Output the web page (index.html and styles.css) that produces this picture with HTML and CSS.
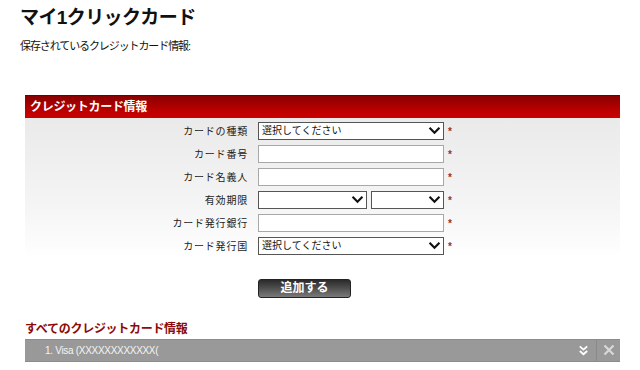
FILE: index.html
```html
<!DOCTYPE html>
<html lang="ja">
  <head>
    <meta charset="utf-8" />
    <title>マイ1クリックカード</title>
    <link rel="stylesheet" href="styles.css">
  </head>
  <body>
    <div class="page">
      <h1>マイ1クリックカード</h1>
      <p class="intro">保存されているクレジットカード情報:</p>

      <div class="panel">
        <div class="panel-head">クレジットカード情報</div>
        <form class="panel-body">
          <div class="form-row">
            <label for="cardType">カードの種類</label>
            <div class="field">
              <span class="select-wrap wide">
                <select id="cardType"><option>選択してください</option></select>
                <svg class="chev" viewBox="0 0 14 10"><path d="M1.5 2 L7 7.5 L12.5 2" fill="none" stroke="#111" stroke-width="2.4"/></svg>
              </span>
              <span class="req">*</span>
            </div>
          </div>
          <div class="form-row">
            <label for="cardNo">カード番号</label>
            <div class="field">
              <input id="cardNo" type="text" class="wide" />
              <span class="req">*</span>
            </div>
          </div>
          <div class="form-row">
            <label for="holder">カード名義人</label>
            <div class="field">
              <input id="holder" type="text" class="wide" />
              <span class="req">*</span>
            </div>
          </div>
          <div class="form-row">
            <label for="expMonth">有効期限</label>
            <div class="field">
              <span class="select-wrap month">
                <select id="expMonth"><option></option></select>
                <svg class="chev" viewBox="0 0 14 10"><path d="M1.5 2 L7 7.5 L12.5 2" fill="none" stroke="#111" stroke-width="2.4"/></svg>
              </span>
              <span class="select-wrap year">
                <select id="expYear"><option></option></select>
                <svg class="chev" viewBox="0 0 14 10"><path d="M1.5 2 L7 7.5 L12.5 2" fill="none" stroke="#111" stroke-width="2.4"/></svg>
              </span>
              <span class="req">*</span>
            </div>
          </div>
          <div class="form-row">
            <label for="bank">カード発行銀行</label>
            <div class="field">
              <input id="bank" type="text" class="wide" />
              <span class="req">*</span>
            </div>
          </div>
          <div class="form-row">
            <label for="country">カード発行国</label>
            <div class="field">
              <span class="select-wrap wide">
                <select id="country"><option>選択してください</option></select>
                <svg class="chev" viewBox="0 0 14 10"><path d="M1.5 2 L7 7.5 L12.5 2" fill="none" stroke="#111" stroke-width="2.4"/></svg>
              </span>
              <span class="req">*</span>
            </div>
          </div>
          <div class="button-row">
            <button type="button" class="add-btn">追加する</button>
          </div>
        </form>
      </div>

      <h2 class="list-title">すべてのクレジットカード情報</h2>
      <div class="card-item">
        <span class="card-name">1. Visa (XXXXXXXXXXXX(</span>
        <span class="card-actions">
          <svg class="icon-more" viewBox="0 0 12 12"><path d="M2 1.5 L6 5 L10 1.5 M2 6.5 L6 10 L10 6.5" fill="none" stroke="#fff" stroke-width="2"/></svg>
          <span class="sep"></span>
          <svg class="icon-close" viewBox="0 0 12 12"><path d="M1.5 1.5 L10.5 10.5 M10.5 1.5 L1.5 10.5" fill="none" stroke="#d8d8d8" stroke-width="2.2"/></svg>
        </span>
      </div>
    </div>
  </body>
</html>
```

FILE: styles.css
```css
:root {
  --text-color: #111111;
  --head-red: #c00000;
  --head-dark: #8e0000;
  --title-red: #8b0a0a;
  --bar-gray: #999999;
}

* {
  box-sizing: border-box;
}

body {
  margin: 0;
  background: #ffffff;
  color: var(--text-color);
  font-family: "Liberation Sans", "Noto Sans CJK JP", sans-serif;
}

.page {
  padding: 0 20px 0 25px;
}

h1 {
  margin: 6px 0 0 -5px;
  font-size: 19px;
  line-height: 24px;
  font-weight: bold;
  letter-spacing: -0.6px;
}

.intro {
  margin: 8px 0 0 -5px;
  font-size: 11px;
  line-height: 16px;
  letter-spacing: -1.1px;
}

.panel {
  width: 595px;
  margin-top: 41px;
}

.panel-head {
  height: 23px;
  padding-left: 5px;
  background: linear-gradient(#8a0000, #b80000 60%, #cc0000);
  border-top: 1px solid #4a1010;
  color: #ffffff;
  font-size: 12px;
  font-weight: bold;
  line-height: 22px;
  letter-spacing: -0.3px;
}

.panel-body {
  padding-top: 1px;
  background: linear-gradient(#eaeaea, #f5f5f5 45%, #ffffff 70%);
}

.form-row {
  display: flex;
  align-items: center;
  height: 23px;
}

.form-row label {
  width: 233px;
  padding-right: 10px;
  text-align: right;
  font-size: 10px;
  letter-spacing: 0.8px;
  color: #222222;
}

.field {
  display: flex;
  align-items: center;
  gap: 4px;
}

input,
select {
  height: 18px;
  margin: 0;
  border: 1px solid #a8a8a8;
  background: #ffffff;
  font-family: "Liberation Sans", "Noto Sans CJK JP", sans-serif;
  font-size: 10px;
  color: var(--text-color);
  outline: none;
}

input {
  padding: 0 4px;
}

.wide {
  width: 186px;
}

.select-wrap {
  position: relative;
  display: inline-flex;
  height: 18px;
}

.select-wrap select {
  width: 100%;
  appearance: none;
  -webkit-appearance: none;
  border-radius: 0;
  border-color: #555555;
  padding: 0 20px 0 3px;
}

.select-wrap.month {
  width: 109px;
}

.select-wrap.year {
  width: 73px;
}

.chev {
  position: absolute;
  right: 3px;
  top: 4px;
  width: 13px;
  height: 9px;
  pointer-events: none;
}

.req {
  font-size: 10px;
  font-weight: bold;
  color: #9a3030;
  line-height: 1;
  padding-top: 3px;
}

.button-row {
  padding: 21px 0 20px 233px;
}

.add-btn {
  width: 93px;
  height: 19px;
  border: 1px solid #222222;
  border-radius: 3px;
  background: linear-gradient(#2a2a2a, #505050 50%, #7a7a7a);
  color: #ffffff;
  font-family: "Liberation Sans", "Noto Sans CJK JP", sans-serif;
  font-size: 12px;
  font-weight: bold;
  line-height: 16px;
  padding: 0;
  cursor: pointer;
}

.list-title {
  margin: 3px 0 0;
  font-size: 12px;
  line-height: 16px;
  font-weight: bold;
  color: var(--title-red);
  letter-spacing: -0.3px;
}

.card-item {
  display: flex;
  align-items: center;
  justify-content: space-between;
  width: 595px;
  height: 23px;
  margin-top: 2px;
  padding-left: 20px;
  background: var(--bar-gray);
  border-top: 1px solid #8c8c8c;
  border-bottom: 1px solid #8c8c8c;
}

.card-name {
  font-size: 10px;
  color: #f4f4f4;
  letter-spacing: -0.3px;
}

.card-actions {
  display: flex;
  align-items: center;
  height: 100%;
}

.icon-more {
  width: 11px;
  height: 11px;
  margin-right: 7px;
}

.sep {
  width: 1px;
  height: 100%;
  background: #8a8a8a;
}

.icon-close {
  width: 12px;
  height: 12px;
  margin: 0 5px 0 6px;
}
```
